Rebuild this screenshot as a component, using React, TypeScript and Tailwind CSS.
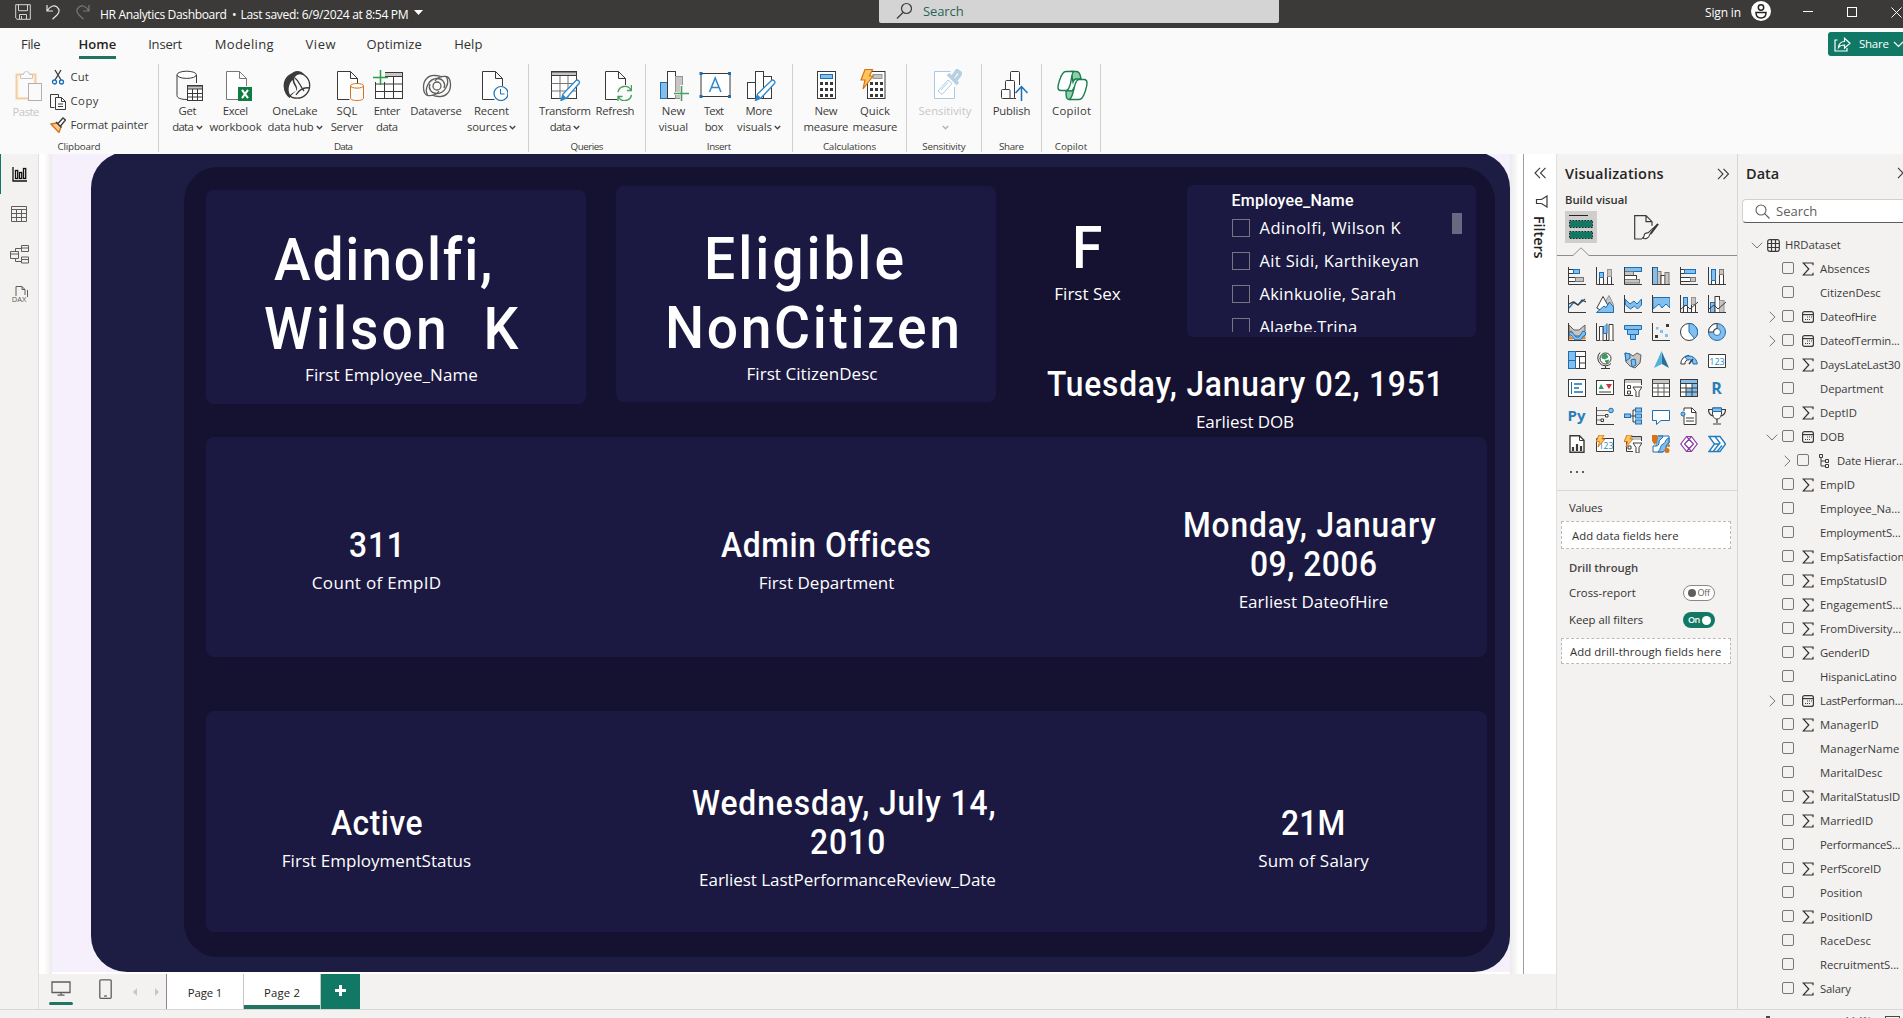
import React, { useLayoutEffect, useRef, useState } from "react";

const DK = "#3b3a39";
const BL = "#1a6fb5";
const LB = "#83beec";
const GR = "#c8c6c4";
const GN = "#117865";

/* Text run that is tracked in or out so that it fills the width `w`; `sx` condenses the glyphs first. */
function T({ w, children, className = "", sx = 1 }: { w: number; children: string; className?: string; sx?: number }) {
  const ref = useRef<HTMLSpanElement>(null);
  const [ls, setLs] = useState(0);
  useLayoutEffect(() => {
    if (!ref.current) return;
    const natural = ref.current.offsetWidth;
    setLs((w / sx - natural) / Math.max(1, children.length - 1));
  }, [w, children, sx]);
  return (
    <span className={"block w-max shrink-0 whitespace-pre " + className}>
      <span
        ref={ref}
        className="inline-block origin-left"
        style={{ letterSpacing: ls, marginRight: sx === 1 ? -ls : w - w / sx - ls, transform: sx === 1 ? undefined : `scaleX(${sx})` }}
      >
        {children}
      </span>
    </span>
  );
}

const Svg = ({ s = 32, h, children, className = "" }: any) => (
  <svg width={s} height={h ?? s} viewBox={`0 0 ${s} ${h ?? s}`} fill="none" stroke={DK} className={"block shrink-0 " + className}>
    {children}
  </svg>
);

const Chev = ({ c = "#444" }) => (
  <svg width="7" height="5" viewBox="0 0 7 5" fill="none" stroke={c} strokeWidth="1.4" className="shrink-0">
    <path d="M.8 1l2.700 2.700L6.200 1" />
  </svg>
);

/* ---------- ribbon icons (32 x 32) ---------- */
const page = (x: number) => <path d={`M${x + 12} 30.5H${x}V2.500H${x + 13}L${x + 20} 9.500V17M${x + 13} 2.500V9.500H${x + 20}`} fill="#fff" />;

const icons: Record<string, React.ReactNode> = {
  paste: (
    <>
      <rect x="3.500" y="5.500" width="19" height="24" stroke="#f3cfa0" strokeWidth="2" fill="#fdf3e4" />
      <rect x="6" y="8" width="14" height="20" fill="#fafafa" stroke="none" />
      <path d="M7.500 9.500V5.500h3a3 3 0 0 1 6 0h3v4z" stroke="#c8c6c4" fill="#fafafa" />
      <rect x="15.500" y="14.500" width="13" height="17" stroke="#b3b0ad" fill="#fafafa" />
    </>
  ),
  get: (
    <>
      <path d="M5 6v20.500c0 2.500 4 4 10 4M24.500 6v8" fill="none" />
      <ellipse cx="14.700" cy="5.800" rx="9.700" ry="3.600" fill="#fff" />
      <rect x="15.500" y="16.500" width="15" height="15" fill="#fff" />
      <path d="M15.500 17h15v3h-15z" fill={GR} />
      <path d="M15.500 24.500h15M15.500 28h15M20.500 20v11M25.500 20v11" />
    </>
  ),
  excel: (
    <>
      <g stroke="#797775">{page(6.5)}</g>
      <rect x="18" y="18" width="14" height="14" fill="#107c41" stroke="none" />
      <path d="M22 20.800l6 8.400M28 20.800l-6 8.400" stroke="#fff" strokeWidth="2" />
    </>
  ),
  onelake: (
    <>
      <circle cx="17" cy="16.500" r="12.700" strokeWidth="1.300" />
      <path d="M12 4.500C14 1 22 1 25 6.500c-4-2-8-1.500-10 1.500-3 5 3 8 2 13-2 2-5 4-7.500 8C4 25 2 16 6 10c1.500-2.500 3.500-4.500 6-5.500z" fill={DK} stroke="none" />
      <path d="M12.500 11c.5 5 5 8 3.500 11-2 1-4 2-6 4-2.500-5-1.500-11 2.500-15z" fill="#fafafa" stroke="none" />
      <path d="M15 9c4 3 5 8 9 13M16 26c3-5 8-8 13.500-7" strokeWidth="1.300" />
    </>
  ),
  sql: (
    <>
      {page(5.5)}
      <path d="M19 17v12c0 1.500 2.500 2.500 6.500 2.500S32 30.500 32 29V17" stroke="#d4731a" fill="#fafafa" transform="translate(-.5)" />
      <ellipse cx="25" cy="16.800" rx="6.500" ry="2.300" stroke="#d4731a" fill="#fff" />
    </>
  ),
  enter: (
    <>
      <rect x="3.500" y="3.500" width="27" height="26" fill="#fff" />
      <rect x="12" y="4" width="18" height="3.500" fill={GR} stroke="none" />
      <path d="M12 7.500h18.500M3.500 15h27M3.500 22.500h27M12.500 8v22M21.500 8v22" />
      <path d="M0 0h13v13H0z" fill="#fafafa" stroke="none" />
      <path d="M1 8.500h15M8.500 1v15" stroke="#2a9d47" strokeWidth="1.500" />
    </>
  ),
  dataverse: (
    <g stroke="#605e5c" strokeWidth="1.300">
      <path d="M14 6.500C7 6 2.500 11 2.500 18c0 4 1 8 4.500 8.500 5 .6 9-1.500 11-4.500" />
      <path d="M18 27.500c7 .5 11.500-4.500 11.500-11.500 0-4-1-8-4.500-8.500-5-.6-9 1.500-11 4.500" />
      <path d="M14 6.500c3 0 5 .5 7 1.500M18 27.500c-3 0-5-.5-7-1.500" />
      <circle cx="16" cy="17" r="4" />
      <path d="M6.500 26C3 20 8 9.500 16 9.500c6 0 9 5 7 9.500M25.500 8C29 14 24 24.500 16 24.500c-6 0-9-5-7-9.500" />
    </g>
  ),
  recent: (
    <>
      {page(6.5)}
      <circle cx="25" cy="24.500" r="7" stroke={BL} fill="#fff" strokeWidth="1.200" />
      <path d="M24.500 20v5h4" stroke={BL} />
    </>
  ),
  transform: (
    <>
      <rect x="1.500" y="2.500" width="25" height="27" fill="#fff" />
      <path d="M1.500 3h25v3.500h-25z" fill={GR} />
      <path d="M1.500 14.500h25M1.500 22h25M10 7v23M18 7v23" stroke="#797775" />
      <path d="M11 31.500l2-6.500L26 11.500c1.500-1.500 4.500 1 3 3L16.500 29z" fill="#fff" stroke="#2b88c8" strokeWidth="1.300" />
      <path d="M11 31.500l2-6 3.500 3.500z" fill="#2b88c8" stroke="none" />
    </>
  ),
  refresh: (
    <>
      {page(5.5)}
      <path d="M17 16h15v16H17z" fill="#fafafa" stroke="none" />
      <path d="M18 23a7 7 0 0 1 13-2M31.500 26a7 7 0 0 1-13 2M31.500 16v5.500H27M18 32.500V27.500h4.500" stroke="#4a9e61" strokeWidth="1.400" />
    </>
  ),
  newvisual: (
    <>
      <rect x="2.500" y="13.500" width="7" height="16" fill={LB} stroke={BL} />
      <rect x="9.500" y="2.500" width="8" height="27" fill="#fff" />
      <rect x="17.500" y="7.500" width="7" height="22" fill={GR} stroke="#979593" />
      <path d="M15 24.500h15M23.500 16v15" stroke="#fafafa" strokeWidth="3" />
      <path d="M16 24.500h15M23.500 17v15" stroke="#4a9e61" strokeWidth="1.600" />
    </>
  ),
  textbox: (
    <>
      <rect x="2" y="4.500" width="29" height="23" fill="#fff" />
      <path d="M.5 3h3v3h-3zM29 3h3v3h-3zM.5 26h3v3h-3zM29 26h3v3h-3z" fill={BL} stroke="none" />
      <path d="M10.500 23l5.700-14 5.700 14M12.500 18.500h7.500" stroke="#2b88c8" strokeWidth="1.500" />
    </>
  ),
  more: (
    <>
      <rect x="3.500" y="13.500" width="8" height="16" fill="#fff" />
      <rect x="11.500" y="2.500" width="8" height="27" fill="#fff" />
      <rect x="19.500" y="7.500" width="8" height="22" fill="#fff" />
      <path d="M11.500 31.500l2-6.500L27.500 11.500c1.500-1.500 4.500 1 3 3L17 29z" fill="#fff" stroke="#2b88c8" strokeWidth="1.300" />
      <path d="M11.500 31.500l2-6 3.500 3.500z" fill="#2b88c8" stroke="none" />
    </>
  ),
  calc: (
    <>
      <rect x="6.500" y="2.500" width="18" height="27" fill="#fff" />
      <rect x="9.500" y="5.500" width="12" height="4" fill={LB} stroke={BL} />
      <path d="M9 13h3v3H9zM14 13h3v3h-3zM19 13h3v3h-3zM9 19h3v3H9zM14 19h3v3h-3zM19 19h3v3h-3zM9 25h3v3H9zM14 25h3v3h-3zM19 25h3v3h-3z" fill={DK} stroke="none" />
    </>
  ),
  quick: (
    <>
      <rect x="7.500" y="2.500" width="17.500" height="27" fill="#fff" />
      <rect x="13" y="5.500" width="9" height="4" fill={GR} stroke="#979593" />
      <path d="M10 13h3v3h-3zM15 13h3v3h-3zM20 13h3v3h-3zM10 19h3v3h-3zM15 19h3v3h-3zM20 19h3v3h-3zM10 25h3v3h-3zM15 25h3v3h-3zM20 25h3v3h-3z" fill={DK} stroke="none" />
      <path d="M5 .5h7.500L9.500 7H13L3 20l2-9H1z" fill="#fcc45a" stroke="#d4731a" strokeWidth="1.200" />
    </>
  ),
  sensitivity: (
    <g stroke="#a9cbe5">
      <path d="M24.500 18v11.500h-20v-27h16" fill="#fff" />
      <path d="M8 22L18 11l4 3.500-10 11z" fill="#fff" />
      <path d="M11 21l7-7.500" />
      <path d="M18 5l10 10M22 9l5-7.500 4 3L26 11" strokeWidth="3.500" stroke="#b5cfe3" />
    </g>
  ),
  publish: (
    <>
      <rect x="14.500" y="2.500" width="9" height="27" rx="1" fill="#fff" />
      <rect x="9.500" y="11.500" width="9" height="18" rx="1" fill="#fff" />
      <rect x="5.500" y="20.500" width="8.500" height="9" rx="1" fill="#fff" />
      <path d="M20 16h6v16h-6z" fill="#fafafa" stroke="none" />
      <path d="M25.500 32V18M19.500 24l6-6.500 6 6.500" stroke={BL} strokeWidth="1.500" />
    </>
  ),
  copilot: (
    <g stroke="#1a7f4f" strokeWidth="1.400">
      <path d="M15 2.500h5c3 0 4 2 4.500 5l.5 2.500h-5c-1.500 0-2.500 1.500-3 3z" fill="#8fceaa" />
      <path d="M10 21.500l6 .5 3-4.500-2 9c-.7 2.500-2 4-4 4-2.500 0-3-2-3-9z" fill="#8fceaa" />
      <path d="M18 2.500h-8c-3.500 0-5 4-6.500 9s-3 10 1.500 10h5c2.500 0 3.500-3 4.500-7 1.200-5 1.300-12 3.500-12z" fill="#fff" />
      <path d="M13 30.500h10c3.500 0 5-4 6.500-9s3-11-1.500-11h-5c-2.500 0-3.500 3-4.500 7-1.200 5-2.500 13-5.500 13z" fill="#fff" />
    </g>
  ),
};

type Line = [string, number];
type Btn = { i: string; cls: string; l1: Line; l2?: Line; chev?: boolean; only?: boolean; off?: boolean };
type Group = { name: string; w: number; cls: string; btns: Btn[] };

const groups: Group[] = [
  {
    name: "Data", w: 19.6, cls: "w-[370px]",
    btns: [
      { i: "get", cls: "w-[40px] ml-[8.500px]", l1: ["Get", 18.6], l2: ["data", 22], chev: true },
      { i: "excel", cls: "w-[54px] ml-px", l1: ["Excel", 25.5], l2: ["workbook", 52.7] },
      { i: "onelake", cls: "w-[58px] ml-[3.500px]", l1: ["OneLake", 45.8], l2: ["data hub", 46], chev: true },
      { i: "sql", cls: "w-[34px] ml-[6px]", l1: ["SQL", 21], l2: ["Server", 33] },
      { i: "enter", cls: "w-[34px] ml-[6px]", l1: ["Enter", 26.5], l2: ["data", 22.7] },
      { i: "dataverse", cls: "w-[54px] ml-[5px]", l1: ["Dataverse", 51.6] },
      { i: "recent", cls: "w-[50px] ml-[3.500px]", l1: ["Recent", 35], l2: ["sources", 40.3], chev: true },
    ],
  },
  {
    name: "Queries", w: 33, cls: "w-[117px]",
    btns: [
      { i: "transform", cls: "w-[54px] ml-[9px]", l1: ["Transform", 51.7], l2: ["data", 22], chev: true },
      { i: "refresh", cls: "w-[42px] ml-[2px]", l1: ["Refresh", 38.6] },
    ],
  },
  {
    name: "Insert", w: 24, cls: "w-[147px]",
    btns: [
      { i: "newvisual", cls: "w-[36px] ml-[9.500px]", l1: ["New", 23.7], l2: ["visual", 29.5] },
      { i: "textbox", cls: "w-[34px] ml-[5.500px]", l1: ["Text", 20.7], l2: ["box", 19] },
      { i: "more", cls: "w-[46px] ml-[5px]", l1: ["More", 27], l2: ["visuals", 34.5], chev: true },
    ],
  },
  {
    name: "Calculations", w: 53, cls: "w-[114px]",
    btns: [
      { i: "calc", cls: "w-[46px] ml-[10px]", l1: ["New", 23.3], l2: ["measure", 44.4] },
      { i: "quick", cls: "w-[46px] ml-[3px]", l1: ["Quick", 30], l2: ["measure", 44.4] },
    ],
  },
  { name: "Sensitivity", w: 43.6, cls: "w-[75px]", btns: [{ i: "sensitivity", cls: "w-[56px] ml-[10px]", l1: ["Sensitivity", 53], only: true, off: true }] },
  { name: "Share", w: 24.5, cls: "w-[60px]", btns: [{ i: "publish", cls: "w-[40px] ml-[9.500px]", l1: ["Publish", 38] }] },
  { name: "Copilot", w: 32, cls: "w-[59px]", btns: [{ i: "copilot", cls: "w-[40px] ml-[9.500px]", l1: ["Copilot", 38.6] }] },
];

function TitleBar() {
  return (
    <header className="flex h-[28px] shrink-0 bg-[#3b3a38] text-white">
      <div className="flex h-[24px] w-[879px] items-center pl-[15px]">
        <svg width="16" height="16" viewBox="0 0 16 16" fill="none" stroke="#d8d6d4" className="shrink-0">
          <path d="M.7 2.200V14L2 15.300h13.300V.7H.7zM3.500.7v6h9v-6M4.500 15V10.500h7V15M6.500 12v3" />
        </svg>
        <svg width="14" height="16" viewBox="0 0 14 16" fill="none" stroke="#e8e6e4" strokeWidth="1.200" className="ml-[15px] shrink-0">
          <path d="M1 1v6h6M1.300 6.700C4 2 8 .8 11 3c3 2.500 2.500 5.500 0 8l-4.500 4.200" />
        </svg>
        <svg width="14" height="16" viewBox="0 0 14 16" fill="none" stroke="#7a7876" strokeWidth="1.200" className="ml-[16px] shrink-0">
          <path d="M13 1v6H7M12.700 6.700C10 2 6 .8 3 3c-3 2.500-2.500 5.500 0 8l4.500 4.200" />
        </svg>
        <div className="mt-[5px] flex text-[12.100px] leading-[18px]">
          <T w={127} className="ml-[10px]">HR Analytics Dashboard</T>
          <T w={4} className="ml-[5px]">•</T>
          <T w={168} className="ml-[4px]">Last saved: 6/9/2024 at 8:54 PM</T>
        </div>
        <svg width="9" height="5" viewBox="0 0 9 5" className="ml-[5px] shrink-0" fill="#fff"><path d="M0 0h9L4.500 5z" /></svg>
      </div>
      <div className="flex h-[23px] w-[400px] items-center rounded-b-[2px] bg-[#d4d4d4] pl-[17px]">
        <Svg s={17} className="mt-[-2px]"><circle cx="10.500" cy="6.500" r="5" strokeWidth="1.200" /><path d="M7 10.500L1 16.500" strokeWidth="1.200" /></Svg>
        <T w={40.5} className="ml-[10px] text-[13px] leading-[21px] text-[#2b6453]">Search</T>
      </div>
      <div className="ml-[426px] flex h-[22px] items-center">
        <T w={36} className="mt-[3px] text-[12px] leading-[18px]">Sign in</T>
        <svg width="20" height="20" viewBox="0 0 20 20" className="ml-[10px] shrink-0">
          <circle cx="10" cy="10" r="10" fill="#fff" />
          <circle cx="10" cy="6.500" r="2.700" fill="none" stroke="#222" strokeWidth="1.500" />
          <path d="M5 11.500h10c0 3.500-2 5.500-5 5.500s-5-2-5-5.500z" fill="none" stroke="#222" strokeWidth="1.500" />
        </svg>
        <div className="ml-[32px] h-px w-[10px] bg-white" />
        <div className="ml-[34px] mt-[2px] h-[10px] w-[10px] border border-white" />
        <svg width="11" height="11" viewBox="0 0 11 11" className="ml-[34px] mt-[2px] shrink-0" stroke="#fff"><path d="M.5.500l10 10M10.500.500l-10 10" /></svg>
      </div>
    </header>
  );
}

const tabs: [string, number, string][] = [
  ["File", 20, "ml-[21px]"], ["Home", 38, "ml-[38px]"], ["Insert", 34, "ml-[32px]"], ["Modeling", 58.5, "ml-[32.500px]"],
  ["View", 29.500, "ml-[32px]"], ["Optimize", 55.500, "ml-[31px]"], ["Help", 28, "ml-[32.500px]"],
];

function Tabs() {
  return (
    <nav className="flex h-[36px] shrink-0 items-start">
      {tabs.map(([t, w, m]) => (
        <div key={t} className={"flex h-[31px] flex-col justify-end " + m}>
          <T w={w} className={"mb-px text-[13px] leading-[22px] " + (t === "Home" ? "font-semibold text-[#252423]" : "text-[#323130]")}>{t}</T>
          <div className={"h-[3px] " + (t === "Home" ? "bg-[#217461]" : "")} />
        </div>
      ))}
      <div className="ml-auto mt-[4px] flex h-[24px] w-[75px] items-center rounded-l-[3px] bg-[#117865] pl-[6px] text-white">
        <Svg s={17} h={15}><g stroke="#fff" strokeWidth="1.200"><path d="M3.500 3H1v11h12v-3" /><path d="M4.500 10.500C5 6.500 7.500 4.500 10.500 4.500V1.200L16 6.200l-5.500 5V8C8 8 6 8.500 4.500 10.500z" /></g></Svg>
        <T w={30} className="ml-[8px] text-[11.500px] leading-[18px]">Share</T>
        <svg width="11" height="7" viewBox="0 0 11 7" fill="none" stroke="#fff" strokeWidth="1.200" className="ml-[4px] shrink-0"><path d="M1 1l4.500 4.500L10 1" /></svg>
      </div>
    </nav>
  );
}

function Ribbon() {
  return (
    <div className="flex h-[90px] shrink-0 text-[11.300px] leading-[16px] text-[#3b3a39]">
      <section className="flex h-[88px] w-[159px] flex-col border-r border-[#d2d0ce]">
        <div className="flex h-[76px] shrink-0">
          <div className="ml-[6px] flex w-[40px] flex-col items-center pt-[5px]">
            <Svg className="ml-[5px]">{icons.paste}</Svg>
            <T w={27} className="mt-[2.500px] text-[#c8c6c4]">Paste</T>
          </div>
          <div className="ml-[4px] flex flex-col pt-px">
            <div className="flex h-[24px] items-center">
              <Svg s={16}><path d="M5 1l6 10M11 1L5 11" strokeWidth="1.300" /><circle cx="4.500" cy="13" r="2" stroke={BL} strokeWidth="1.300" /><circle cx="11.500" cy="13" r="2" stroke={BL} strokeWidth="1.300" /></Svg>
              <T w={18.3} className="ml-[4.500px]">Cut</T>
            </div>
            <div className="flex h-[24px] items-center">
              <Svg s={16} h={17}><path d="M4.500 14.500H.5V1.500h8v3M5.500 16.500V4.500h6l4 4v8zM11.500 4.500v4h4M8 11h5M8 13.500h5" /></Svg>
              <T w={27.5} className="ml-[4.500px]">Copy</T>
            </div>
            <div className="flex h-[24px] items-center">
              <Svg s={16}><path d="M1 7l6-1 4 4-2 5.500z" fill="#fcc98a" stroke="#d4731a" strokeWidth="1.300" /><path d="M6 5l5.500 5.500M8 6.500l5-5.500 2.500 2-5 6" strokeWidth="1.300" fill="#fff" /></Svg>
              <T w={78} className="ml-[4.500px]">Format painter</T>
            </div>
          </div>
        </div>
        <T w={42.7} className="mx-auto text-[9.800px] leading-[14px]">Clipboard</T>
      </section>
      {groups.map((g) => (
        <section key={g.name} className={"flex h-[88px] flex-col border-r border-[#d2d0ce] " + g.cls}>
          <div className="flex h-[76px] shrink-0">
            {g.btns.map((b, k) => (
              <div key={k} className={"flex shrink-0 flex-col items-center pt-[5px] " + b.cls + (b.off ? " text-[#c8c6c4]" : "")}>
                <Svg className="ml-px">{icons[b.i]}</Svg>
                <T w={b.l1[1]} className="mt-[2px]">{b.l1[0]}</T>
                <div className="flex h-[16px] items-center gap-[2px]">
                  {b.l2 && <T w={b.l2[1]}>{b.l2[0]}</T>}
                  {b.chev && <Chev />}
                  {b.only && <Chev c="#b3b0ad" />}
                </div>
              </div>
            ))}
          </div>
          <T w={g.w} className="mx-auto text-[9.800px] leading-[14px]">{g.name}</T>
        </section>
      ))}
    </div>
  );
}

/* ---------- report page ---------- */
function Metric({ lines, label, lw, big, shift = "" }: { lines: Line[]; label: string; lw: number; big?: boolean; shift?: string }) {
  return (
    <div className="flex flex-col items-center text-white">
      {lines.map(([t, w], k) => (
        <T key={t} w={w} sx={0.92} className={"font-['Roboto'] font-medium " + (big ? "text-[60px] leading-[69px] " : "text-[34.500px] leading-[39px] ") + (k === 0 ? shift : "")}>{t}</T>
      ))}
      <T w={lw} className={"text-[17px] leading-[24px] " + (big ? "" : "mt-[6px]")}>{label}</T>
    </div>
  );
}

const people: Line[] = [["Adinolfi, Wilson K", 141], ["Ait Sidi, Karthikeyan", 159], ["Akinkuolie, Sarah", 137], ["Alagbe,Trina", 98]];

function Report() {
  return (
    <main className="flex h-[820px] w-[1484px] shrink-0 bg-white">
      <div className="h-full w-[13px] shrink-0 bg-gradient-to-r from-white from-40% to-[#ebebeb]" />
      <div className="h-[818px] w-[1458px] shrink-0 overflow-hidden bg-[#f5f0fb] pl-[39px]">
        <div className="-mt-[2px] h-[820px] w-[1419px] rounded-[36px] bg-[#1d1c43] pl-[92.500px] pt-[15px]">
          <div className="flex h-[790px] w-[1311.500px] flex-col rounded-[34px] bg-[#141230]">
            <div className="flex h-[270px] shrink-0">
              <div className="ml-[22px] mt-[22.500px] h-[214.500px] w-[380px] shrink-0 rounded-[8px] bg-[#1b1941] pr-[8px] pt-[35.500px]">
                <Metric big lines={[["Adinolfi,", 217], ["Wilson  K", 254]]} label="First Employee_Name" lw={172.5} shift="pr-[16px]" />
              </div>
              <div className="ml-[30px] mt-[19px] h-[215.500px] w-[380px] shrink-0 rounded-[8px] bg-[#1b1941] pl-[13px] pt-[38px]">
                <Metric big lines={[["Eligible", 200], ["NonCitizen", 295]]} label="First CitizenDesc" lw={131} shift="pr-[16px]" />
              </div>
              <div className="flex w-[499px] flex-col">
                <div className="flex">
                  <div className="w-[184px] pt-[45.500px]"><Metric big lines={[["F", 31]]} label="First Sex" lw={66} /></div>
                  <div className="ml-[7.500px] mt-[18px] flex h-[151.500px] w-[289px] shrink-0 flex-col rounded-[6px] bg-[#1b1941] pl-[44.500px] pt-[4px] text-white">
                    <T w={122.5} className="font-['Roboto'] text-[16px] font-medium leading-[24px]">Employee_Name</T>
                    <div className="flex h-[119px] overflow-hidden">
                      <ul className="-mt-[1.500px] w-[220px]">
                        {people.map(([n, w]) => (
                          <li key={n} className="flex h-[33px] items-center">
                            <span className="h-[18px] w-[18px] border border-[#77757f]" />
                            <T w={w} className="ml-[10px] text-[16.500px] leading-[24px]">{n}</T>
                          </li>
                        ))}
                      </ul>
                      <div className="mt-[-2px] h-[23px] w-[10px] bg-[#6a6880]" />
                    </div>
                  </div>
                </div>
                <div className="flex justify-center pt-[28.500px]">
                  <Metric lines={[["Tuesday, January 02, 1951", 397]]} label="Earliest DOB" lw={98} />
                </div>
              </div>
            </div>
            <div className="ml-[22px] flex h-[219.500px] w-[1281.500px] shrink-0 items-center rounded-[8px] bg-[#1b1941] pt-[27px]">
              <div className="w-[342px]"><Metric lines={[["311", 56]]} label="Count of EmpID" lw={129} /></div>
              <div className="w-[558px]"><Metric lines={[["Admin Offices", 208]]} label="First Department" lw={135.5} /></div>
              <div className="w-[381px] pl-[35px]"><Metric lines={[["Monday, January", 253], ["09, 2006", 127]]} label="Earliest DateofHire" lw={149.5} shift="pr-[9px]" /></div>
            </div>
            <div className="ml-[22px] mt-[54.500px] flex h-[221px] w-[1281.500px] shrink-0 items-center rounded-[8px] bg-[#1b1941] pt-[33px]">
              <div className="w-[342px]"><Metric lines={[["Active", 92]]} label="First EmploymentStatus" lw={189} /></div>
              <div className="w-[558px] pl-[42px]"><Metric lines={[["Wednesday, July 14,", 304], ["2010", 75]]} label="Earliest LastPerformanceReview_Date" lw={296.5} shift="pr-[7px]" /></div>
              <div className="w-[381px] pl-[35px]"><Metric lines={[["21M", 64]]} label="Sum of Salary" lw={110.5} /></div>
            </div>
          </div>
        </div>
      </div>
      <div className="h-full w-[13px] shrink-0 bg-gradient-to-l from-white from-30% to-[#ebebeb]" />
    </main>
  );
}

function PageBar() {
  return (
    <footer className="flex h-[35px] shrink-0 bg-[#f3f2f1] text-[11.300px] leading-[16px] text-[#252423]">
      <div className="ml-[10px] flex w-[24px] flex-col items-center">
        <Svg s={20} h={15} className="mt-[7px]"><path d="M1 1h18v10.500H1zM10 12v2M6.500 14.200h7" stroke="#605e5c" strokeWidth="1.300" /></Svg>
        <div className="mt-[6px] h-[3px] w-full rounded-[2px] bg-[#217461]" />
      </div>
      <Svg s={13} h={21} className="ml-[26px] mt-[5px]"><rect x=".8" y=".8" width="11.400" height="18.500" rx="1" stroke="#605e5c" strokeWidth="1.300" /><path d="M5 17h3" /></Svg>
      <svg width="4" height="8" viewBox="0 0 4 8" className="ml-[21px] mt-[14px] shrink-0" fill="#c8c6c4"><path d="M4 0v8L0 4z" /></svg>
      <svg width="4" height="8" viewBox="0 0 4 8" className="ml-[18px] mt-[14px] shrink-0" fill="#c8c6c4"><path d="M0 0v8l4-4z" /></svg>
      <div className="ml-[7px] flex w-[77px] justify-center border-l border-[#8a8886] bg-white pt-[11px]"><T w={34.5}>Page 1</T></div>
      <div className="flex w-[78px] flex-col items-center justify-between border-x border-[#c8c6c4] bg-white pt-[11px]">
        <T w={36}>Page 2</T>
        <div className="h-[4px] w-full bg-[#217461]" />
      </div>
      <div className="flex w-[39px] items-center justify-center bg-[#117865] pb-[3px]">
        <svg width="11" height="11" viewBox="0 0 11 11" stroke="#fff" strokeWidth="3"><path d="M0 5.500h11M5.500 0v11" /></svg>
      </div>
    </footer>
  );
}

function Rail() {
  return (
    <aside className="flex w-[39px] shrink-0 flex-col items-center border-r border-[#e1dfdd] bg-[#f3f2f1]">
      <div className="flex h-[40px] w-full justify-center border-l border-[#117865] pt-[13px]">
        <Svg s={15}><g stroke="#111" strokeWidth="1.300"><path d="M1 0v14h14" /><rect x="3.500" y="3.500" width="2.200" height="8" /><rect x="7.500" y="5.500" width="2.200" height="6" /><rect x="11.500" y="1.500" width="2.200" height="10" /></g></Svg>
      </div>
      <Svg s={16} className="mt-[12px]"><path d="M.5.500h15v15H.5zM.5 3.500h15M.5 7.500h15M.5 11.500h15M5.500 3.500v12M10.500 3.500v12" stroke="#605e5c" /></Svg>
      <Svg s={19} className="mt-[23px]"><path d="M.5 6.500h8v7h-8zM.5 9h8M11.500.5h7v6h-7zM11.500 3h7M11.500 12h7v6h-7zM11.500 14.500h7M5.500 6V3.500h6M5.500 14v2.500h6" stroke="#605e5c" /></Svg>
      <div className="mt-[22px] flex flex-col items-center">
        <Svg s={17} h={11}><path d="M5 10V.5h6l3 3V9M11 .5v3h3M16.500 4v8" stroke="#605e5c" /></Svg>
        <T w={15} className="-mt-px text-[7.500px] leading-[7px] text-[#605e5c]">DAX</T>
      </div>
    </aside>
  );
}

function Filters() {
  return (
    <aside className="flex h-[820px] w-[33px] shrink-0 flex-col items-center border-l border-[#a19f9d] bg-white">
      <Svg s={13} h={12} className="mt-[13px]"><path d="M6 .8L1 6l5 5.200M11.500.8L6.500 6l5 5.200" strokeWidth="1.100" /></Svg>
      <Svg s={13} h={13} className="ml-[2px] mt-[16px]"><path d="M12 1v11L6.500 8.500h-5v-4h5z" strokeWidth="1.200" /></Svg>
      <div className="ml-[2px] mt-[8px] w-[20px] [writing-mode:vertical-rl]">
        <span className="text-[14.500px] font-semibold leading-[20px] tracking-[-0.100px] text-[#252423]">Filters</span>
      </div>
    </aside>
  );
}

/* ---------- visualization gallery (18 x 18) ---------- */
const R = (x: number, y: number, w: number, h: number, f = "#fff", s = DK) => <rect x={x} y={y} width={w} height={h} fill={f} stroke={s} />;
const AX = <path d="M.5 0V17.500H18" />;
const mini = <path d="M.5 3.500h17v13H.5z" fill="#fff" />;
const bolt = <path d="M3 0h5L6 4h3L2 12l1.500-5.500H0z" fill="#fcc45a" stroke="#d4731a" strokeWidth=".9" />;

const gallery: React.ReactNode[] = [
  <>{R(0.5, 2.5, 5, 4)}{R(5.5, 2.5, 6, 4, LB, BL)}{R(0.5, 10.5, 7, 4)}{R(7.5, 10.5, 8, 4, GR, "#797775")}{AX}</>,
  <>{R(3.5, 10.5, 4, 7)}{R(3.5, 5.5, 4, 5, LB, BL)}{R(11.5, 9.5, 4, 8)}{R(11.5, 2.5, 4, 7, GR, "#979593")}{AX}</>,
  <>{R(0.5, 0.5, 17, 4, LB, BL)}{R(0.5, 4.5, 9, 4, GR, "#797775")}{R(0.5, 8.5, 12, 4)}{R(0.5, 12.5, 15, 3.5, GR, "#797775")}{AX}</>,
  <>{R(0.5, 0.5, 5, 17, LB, BL)}{R(5.5, 4.5, 3.5, 13, GR, "#797775")}{R(9, 8.5, 4, 9)}{R(13, 5.5, 4, 12, GR, "#797775")}{AX}</>,
  <>{R(0.5, 2.5, 4, 4)}{R(4.5, 2.5, 11, 4, LB, BL)}{R(0.5, 10.5, 10, 4)}{R(10.5, 10.5, 5, 4, GR, "#797775")}{AX}</>,
  <>{R(3.5, 12, 4, 5.5)}{R(3.5, 2.5, 4, 11, LB, BL)}{R(11.5, 6.5, 4, 11)}{R(11.5, 2.5, 4, 5, GR, "#797775")}{AX}</>,
  <>{AX}<path d="M1 13l5-6 4 3 7-6" stroke={BL} strokeWidth="1.300" /><path d="M1 9l4-2 5 3 4-5 4 2" strokeWidth="1.200" /></>,
  <><path d="M9 7l4-6.500 4.500 9v8H10z" fill={GR} stroke="#979593" /><path d="M.8 13L7 1.500l5 9-5 6z" fill="#fff" /><path d="M.5 17.500L8 11l2 1.500L13.500 7l4 5v5.500z" fill={LB} stroke={BL} /></>,
  <><path d="M1 4l5 5 4-3 3 3 4.500-5v6l-4 4-3-3-4 3-5-4z" fill={LB} stroke={BL} />{AX}</>,
  <><path d="M.8 2.500H18V13l-4-4-4 4-3-4-6 5z" fill={LB} stroke={BL} />{AX}</>,
  <>{R(3.5, 10, 4, 7.5)}{R(3.5, 2.5, 4, 8, LB, BL)}{R(11.5, 9, 4, 8.500)}{R(11.5, 2.5, 4, 7, GR, "#979593")}<path d="M1 14l5-4 4 4 8-7" />{AX}</>,
  <>{R(2.5, 7.5, 4.5, 10, LB, BL)}{R(7, 1.5, 4.500, 16)}{R(11.500, 5.5, 4.500, 12, GR, "#979593")}<path d="M1 14l5-4 4 4 8-7" />{AX}</>,
  <><path d="M1 2l5 5h5l6-5v6l-5 5H7l-6-4z" fill={GR} stroke="#605e5c" /><path d="M1 12l4 4H1zM14 12h3v4h-3zM1 8h3v3H1z" fill="#f09a3e" stroke="#c96a10" strokeWidth=".6" /><path d="M1 9h3l4 5h3l4-6 2.500 1v3l-2 1-3 4H7l-4-5H1z" fill={LB} stroke={BL} />{AX}</>,
  <>{AX}<path d="M3.500 17.500v-14h3.500v14M10.500 17.500v-7M13 17.500V1.500h4v16" fill="#fff" /><path d="M7.500 3v7.500h3.500V.5" fill={LB} stroke={BL} /></>,
  <><path d="M.5 2.500h17v4H.5z" fill={LB} stroke={BL} /><path d="M3.500 6.500h11v5h-11z" fill={LB} stroke={BL} /><path d="M6.500 11.500h5v5h-5z" fill={LB} stroke={BL} /></>,
  <>{AX}<g stroke="none"><path d="M14 1h3v3h-3zM3 12h3v3H3z" fill={DK} /><path d="M4 4h2.500v2.500H4zM8 7h3v3H8zM13 11h3v3h-3z" fill={LB} /></g></>,
  <><circle cx="9" cy="9" r="8.500" fill="#fff" /><path d="M9 .5A8.500 8.500 0 0 1 14.500 15.500L9 9z" fill={LB} stroke={BL} /></>,
  <><circle cx="9" cy="9" r="6" stroke={LB} strokeWidth="5" /><circle cx="9" cy="9" r="8.500" stroke={BL} /><circle cx="9" cy="9" r="3.500" fill="#fff" stroke={BL} /><path d="M9 .5A8.500 8.500 0 0 0 .5 9h5A3.500 3.500 0 0 1 9 5.500z" fill="#fff" /></>,
  <>{R(0.5, 0.5, 17, 17)}{R(0.5, 0.5, 7, 9, LB, BL)}{R(0.5, 9.5, 7, 8, LB, BL)}<path d="M7.500 5.500h10M11.500 5.500v12M11.500 12h6" /></>,
  <><circle cx="9.500" cy="7.500" r="5.500" fill="#fff" /><path d="M6 4l4-1 2 3-3 2-3-1zM9 10l4-1-2 3z" fill="#3b9b5c" stroke="#3b9b5c" /><path d="M4 1.500a8 8 0 0 0 0 11c3 3 8 3 11 0M9.500 15v2M5 17.500h9" /></>,
  <><path d="M1 2l5 1 3 2 4-3 4 2-1 8-5 5-5-2-4-4z" fill={GR} stroke="#605e5c" /><path d="M1 2l5 1v4l-4 3zM7 9l4-1 1 6-4 2z" fill={LB} stroke={BL} /></>,
  <><path d="M9.500 0L17 17l-7-4z" fill="#2a6f9a" stroke="none" /><path d="M9.500 0L2 17l8-4z" fill="#4fb3dc" stroke="none" /></>,
  <><path d="M.8 13A8.200 8.200 0 0 1 9 4.500v4A4 4 0 0 0 5 13z" fill="#fff" /><path d="M5 6a8.200 8.200 0 0 1 12.200 7H13a4 4 0 0 0-5.500-4z" fill={LB} stroke={BL} /><path d="M9 13l4-5" strokeWidth="1.500" /></>,
  <>{mini}<text x="9" y="13.500" textAnchor="middle" fontSize="9" fill="#2b88c8" stroke="none">123</text></>,
  <>{R(0.5, 0.5, 17, 17)}<path d="M3.500 3v12" stroke={BL} /><path d="M6 5h8M6 9h5M6 13h9" stroke={BL} strokeWidth="1.600" /></>,
  <>{R(0.5, 1.5, 17, 14)}<path d="M2.500 10l2.500-5 3 5z" fill="#3b9b5c" stroke="none" /><path d="M10 5h6l-3 5z" fill="#d13438" stroke="none" /><path d="M3 13h12" /></>,
  <><path d="M9 16.500H.5V.5h17V6" fill="#fff" /><path d="M1 1h16v3H1z" fill={GR} stroke="none" /><path d="M3.500 6.500h3v3h-3zM3.500 12h3v3h-3z" /><path d="M9 8h9l-3 4.500V18h-3v-5.500z" fill="#fff" /></>,
  <>{R(0.5, 0.5, 17, 17)}<path d="M1 1h16v3H1z" fill={GR} stroke="none" /><path d="M.5 4.500h17M.5 9h17M.5 13h17M6 4.500v13M12 4.500v13" stroke="#605e5c" /></>,
  <>{R(0.5, 0.5, 17, 17)}<path d="M12 1h5v16h-5zM6 9h6v8H6z" fill={LB} stroke="none" /><path d="M1 1h16v3H1z" fill={LB} stroke="none" /><path d="M.5 4.500h17M.5 9h17M.5 13h17M6 4.500v13M12 4.500v13" /></>,
  <text x="8.500" y="15" textAnchor="middle" fontSize="16" fontWeight="700" fill="#2b7fb8" stroke="none">R</text>,
  <text x="8.500" y="13.500" textAnchor="middle" fontSize="15" fontWeight="700" fill="#2b7fb8" stroke="none">Py</text>,
  <>{AX}<path d="M1 3.500h11M1 8.500h8M1 13h4" stroke="#797775" /><circle cx="15" cy="3.500" r="2.300" fill={LB} stroke={BL} /><path d="M9.500 7.500h2.500v2.500H9.500zM5 12h2.500v2.500H5z" fill="#fff" /></>,
  <><path d="M6 9h5M9 3v12M9 3h3M9 15h3" />{R(0.5, 7, 6, 3.500, LB, BL)}{R(11.5, 1, 6, 4, LB, BL)}{R(11.5, 7, 6, 4, LB, BL)}{R(11.5, 13, 6, 4, LB, BL)}</>,
  <path d="M.5 3.500h17v10H9L4.500 17.500v-4h-4z" fill="#fff" stroke={BL} />,
  <><path d="M4 9v8.500h12V5l-4-4H4v3M11.500 1v4.500H16M6 11h8M6 14h8" fill="#fff" /><circle cx="3" cy="7" r="2" fill={LB} stroke={BL} /></>,
  <><path d="M4.500 1h9v5c0 4-2 6-4.500 6S4.500 10 4.500 6z" fill="#fff" /><path d="M4.500 1h9v3.500h-9z" fill={LB} stroke={BL} /><path d="M4.500 2.500h-4c0 4 2 6 5 6.500M13.500 2.500h4c0 4-2 6-5 6.500M9 12v4M5 17h8" strokeWidth="1.200" /></>,
  <><path d="M2 .7h9.500l4.500 4.500v12H2z" fill="#fff" strokeWidth="1.400" /><path d="M11.500 1v4.500H16" /><path d="M5 12v4M9 9v7M13 11v5" strokeWidth="2.200" /></>,
  <>{mini}<text x="10" y="13.500" textAnchor="middle" fontSize="8.500" fill="#2b88c8" stroke="none">123</text>{bolt}</>,
  <><path d="M9 16.500H2.500V1.500h15V6" fill="#fff" /><path d="M7 2h10v3H7z" fill={GR} stroke="none" /><path d="M4 11h3v3H4z" /><path d="M9 8h9l-3 4.500V18h-3v-5.500z" fill="#fff" />{bolt}</>,
  <><path d="M6 1h11v7c-2 1-3 2-3 4s-2 5-4 5H1V11h3z" fill="#fff" stroke={BL} /><path d="M6 1h5c0 3-4 3-4 6s-1 4-3 4M17 3c-4 1-3 5-6 6s-2 5-5 8h4c3 0 4-3 4-5s1-3 3-4z" fill={LB} stroke={BL} /><path d="M0 0h5.500v6L2.700 10 0 6z" fill="#d4731a" stroke="none" /><circle cx="16.500" cy="10.500" r="1.500" fill="#d4731a" stroke="none" /><circle cx="15" cy="15.500" r="2.500" fill="#d4731a" stroke="none" /></>,
  <g stroke="#8a3f9e" strokeWidth="1.200"><path d="M6.500 1.500h5L17.200 9l-5.700 7.500h-5L.8 9z" fill="#fff" /><path d="M9 4.500L4.500 9 9 13.500 13.500 9zM6.500 1.500L13.500 9M11.500 1.500L4.500 9M4.500 9l7 7.500M13.500 9l-7 7.500" /></g>,
  <g stroke="#1f7bc0" strokeWidth="1.300" fill="#fff"><path d="M1 1.500h11l5.500 7.500-5.500 7.500H1L6.500 9z" /><path d="M6.500 9H11M5.500 16L12 8 7 1.500M9.500 16l4.500-5.500" fill="none" /></g>,
];

const Toggle = ({ on }: { on?: boolean }) =>
  on ? (
    <div className="flex h-[16px] w-[32px] items-center justify-between rounded-full bg-[#117865] pl-[5px] pr-[4px] text-white"><T w={12.5} className="text-[9px] font-semibold leading-[16px]">On</T><span className="h-[9px] w-[9px] rounded-full bg-white" /></div>
  ) : (
    <div className="flex h-[16px] w-[32px] items-center justify-between rounded-full border border-[#8a8886] bg-white px-[4px] text-[#605e5c]"><span className="h-[8px] w-[8px] rounded-full bg-[#605e5c]" /><T w={12.5} className="text-[9px] leading-[14px]">Off</T></div>
  );

function Visualizations() {
  return (
    <aside className="flex w-[181px] shrink-0 flex-col border-r border-[#d9d7d5] text-[11.300px] leading-[16px] text-[#323130]">
      <div className="flex h-[40px] items-center justify-between pl-[8px] pr-[7px]">
        <T w={98.5} className="text-[14.500px] font-semibold leading-[22px] text-[#252423]">Visualizations</T>
        <Svg s={13} h={12} className="-mt-px"><path d="M1 .8L6 6l-5 5.200M6.500.8L11.500 6l-5 5.200" strokeWidth="1.100" /></Svg>
      </div>
      <T w={62} className="ml-[8px] mt-[-3px] font-semibold leading-[18px]">Build visual</T>
      <div className="mt-[2px] flex pl-[8px]">
        <div className="h-[32px] w-[32px] bg-[#d0cecc]">
          <Svg><path d="M4 4.500h19" stroke="#252423" /><path d="M4.500 9.500h23v7h-23zM4.500 20.500h23v7h-23z" fill={GN} stroke="#252423" strokeDasharray="1.500 1.500" /></Svg>
        </div>
        <Svg s={26} className="ml-[37px] mt-[4px]"><path d="M8 24H.7V.7H12l6 6v4M12 .7v6h6" strokeWidth="1.200" /><path d="M24 9L14 18c-2-.5-4 1-4 3 0 1-1 2-2 2 3 1.500 7 .5 7.500-3L24 9z" fill="#fff" strokeWidth="1.100" /><path d="M24 9l-7.500 10" strokeWidth="2" /></Svg>
      </div>
      <svg width="180" height="9" viewBox="0 0 180 9" fill="none" stroke="#8f8d8b" className="mt-[4px] shrink-0"><path d="M0 8.500h16L24 .8l8 7.700h148" /></svg>
      <div className="ml-[11px] mt-[11px] grid auto-rows-[28px] grid-cols-[repeat(6,28px)] font-['Open_Sans']">
        {gallery.map((g, k) => <Svg key={k} s={18}>{g}</Svg>)}
      </div>
      <div className="ml-[13px] mt-[8px] flex gap-[4px]">
        <i className="h-[2px] w-[2px] bg-[#605e5c]" /><i className="h-[2px] w-[2px] bg-[#605e5c]" /><i className="h-[2px] w-[2px] bg-[#605e5c]" />
      </div>
      <div className="mt-[17px] h-px bg-[#d9d7d5]" />
      <T w={34} className="ml-[12px] mt-[9px]">Values</T>
      <div className="ml-[4px] mt-[5px] flex h-[28px] w-[170px] items-center border border-dashed border-[#bdbbb9] bg-white pl-[10px] pt-px"><T w={107}>Add data fields here</T></div>
      <T w={69.5} className="ml-[12px] mt-[11px] font-semibold text-[#484644]">Drill through</T>
      <div className="mt-[5px] flex h-[24px] items-center justify-between pl-[12px] pr-[22px]"><T w={66.5}>Cross-report</T><Toggle /></div>
      <div className="mt-[3px] flex h-[24px] items-center justify-between pl-[12px] pr-[22px]"><T w={74}>Keep all filters</T><Toggle on /></div>
      <div className="ml-[4px] mt-[6px] flex h-[26px] w-[170px] items-center border border-dashed border-[#bdbbb9] bg-white pl-[8px] pt-px"><T w={151}>Add drill-through fields here</T></div>
    </aside>
  );
}

type Field = [string, number, string?];
const fields: Field[] = [
  ["Absences", 50, "s"], ["CitizenDesc", 61], ["DateofHire", 57, "d>"], ["DateofTermin...", 80, "d>"], ["DaysLateLast30", 81, "s"],
  ["Department", 63.5], ["DeptID", 37, "s"], ["DOB", 24, "dv"], ["Date Hierar...", 68, "h>"], ["EmpID", 35, "s"], ["Employee_Na...", 80],
  ["EmploymentS...", 81], ["EmpSatisfaction", 84, "s"], ["EmpStatusID", 67, "s"], ["EngagementS...", 81.5, "s"], ["FromDiversity...", 81, "s"],
  ["GenderID", 50, "s"], ["HispanicLatino", 77], ["LastPerforman...", 83, "d>"], ["ManagerID", 58.5, "s"], ["ManagerName", 79],
  ["MaritalDesc", 62], ["MaritalStatusID", 80, "s"], ["MarriedID", 53, "s"], ["PerformanceS...", 81], ["PerfScoreID", 61, "s"],
  ["Position", 42], ["PositionID", 53, "s"], ["RaceDesc", 50.5], ["RecruitmentS...", 79], ["Salary", 31, "s"],
];

const ArrowR = <Svg s={7} h={12}><path d="M.7.800L6 6 .7 11.200" stroke="#797775" /></Svg>;
const ArrowD = <Svg s={12} h={7}><path d="M.8.700L6 6 11.200.7" stroke="#797775" /></Svg>;

function FieldIcon({ k }: { k: string }) {
  if (k === "s") return <Svg s={12} h={14}><path d="M11 3.200V1H1.200L6.800 7 1.200 13H11v-2.200" stroke="#323130" strokeWidth="1.200" /></Svg>;
  if (k === "d") return <Svg s={12} h={12}><rect x=".6" y=".6" width="10.800" height="10.800" rx="2" strokeWidth="1.200" /><path d="M.6 3.600h10.800" strokeWidth="1.200" /><path d="M5 6h1M7 6h1M9 6h1M3 8.500h1M5 8.500h1M7 8.500h1" strokeWidth="1.200" /></Svg>;
  if (k === "h") return <Svg s={10} h={14}><path d="M.5.500h3v3h-3zM6.500 5.500h3v3h-3zM6.500 10.500h3v3h-3zM2 3.500V12h4.500M2 7h4.500" /></Svg>;
  return null;
}

function DataPane() {
  return (
    <aside className="flex w-[165px] shrink-0 flex-col overflow-hidden text-[11.300px] leading-[16px] text-[#3b3a39]">
      <div className="flex h-[45px] items-start justify-between pl-[8px] pt-[9px]">
        <T w={33} className="text-[14.500px] font-semibold leading-[22px] text-[#252423]">Data</T>
        <Svg s={6} h={12} className="mt-[4px]"><path d="M1 .8L6 6l-5 5.200" strokeWidth="1.100" /></Svg>
      </div>
      <div className="ml-[4px] flex h-[24px] shrink-0 items-center rounded-l-[4px] border border-r-0 border-[#d2d0ce] border-b-[#605e5c] bg-white pl-[12px]">
        <Svg s={15}><circle cx="6" cy="6" r="5" stroke="#605e5c" strokeWidth="1.100" /><path d="M9.700 9.700L14.500 14.500" stroke="#605e5c" strokeWidth="1.200" /></Svg>
        <T w={41} className="ml-[6px] text-[13px] leading-[20px] text-[#605e5c]">Search</T>
      </div>
      <div className="mt-[10px] flex h-[24px] shrink-0 items-center pl-[13px]">
        {ArrowD}
        <Svg s={13} className="ml-[4px]"><rect x=".7" y=".7" width="11.600" height="11.600" rx="2" strokeWidth="1.200" /><path d="M.7 4.500h11.600M.7 8.500h11.600M4.500.7v11.600M8.500.7v11.600" strokeWidth="1.200" /></Svg>
        <T w={56} className="ml-[5px]">HRDataset</T>
      </div>
      {fields.map(([n, w, k]) => {
        const kind = k?.[0] ?? "";
        const arrow = k?.[1];
        return (
          <div key={n} className={"flex h-[24px] shrink-0 items-center " + (kind === "h" ? "pl-[43px]" : "pl-[28px]")}>
            <div className="-ml-[2px] mr-[2px] flex w-[16px] shrink-0 justify-center">{arrow === ">" ? ArrowR : arrow === "v" ? ArrowD : null}</div>
            <span className="mt-[-2px] h-[12px] w-[12px] shrink-0 rounded-[2px] border border-[#797775]" />
            <div className={"flex shrink-0 items-center justify-center " + (kind === "h" ? "ml-[8px] mr-[6px] w-[14px]" : "ml-[6px] mr-[5px] w-[15px]")}><FieldIcon k={kind} /></div>
            <T w={w}>{n}</T>
          </div>
        );
      })}
    </aside>
  );
}

export default function App() {
  return (
    <div className="flex h-[1018px] w-[1903px] flex-col overflow-hidden bg-[#f3f2f1] font-['Open_Sans',sans-serif]">
      <TitleBar />
      <div className="flex h-[126px] shrink-0 flex-col bg-[#fafafa]">
        <Tabs />
        <Ribbon />
      </div>
      <div className="flex h-[855px] shrink-0">
        <Rail />
        <div className="flex w-[1518px] shrink-0 flex-col border-r border-[#e1dfdd]">
          <div className="flex">
            <Report />
            <Filters />
          </div>
          <PageBar />
        </div>
        <Visualizations />
        <DataPane />
      </div>
      <div className="flex h-[9px] shrink-0 overflow-hidden border-t border-[#d9d7d5]">
        <div className="ml-[1766px] mt-[6px] h-[6px] w-[4px] bg-[#484644]" />
        <T w={28} className="ml-[74px] mt-[3px] text-[11px] leading-[16px] text-[#605e5c]">114%</T>
        <div className="ml-[13px] mt-[6px] h-[10px] w-[15px] shrink-0 border border-[#484644]" />
      </div>
    </div>
  );
}
